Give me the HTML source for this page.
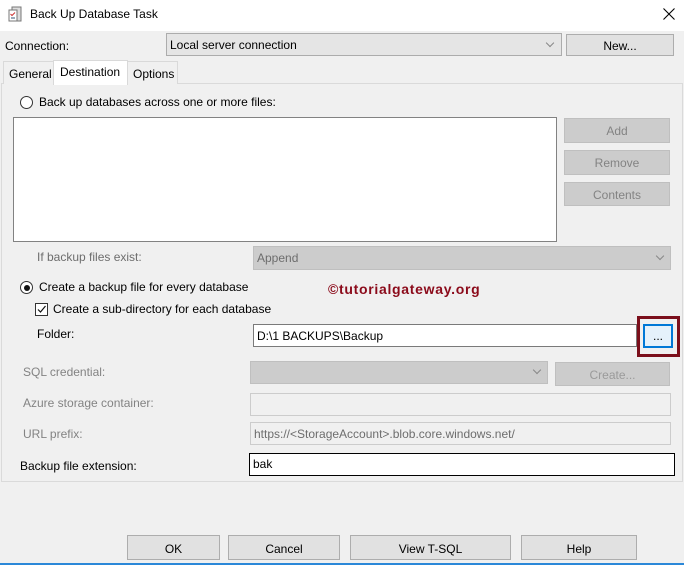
<!DOCTYPE html>
<html><head><style>
*{box-sizing:border-box;margin:0;padding:0}
body{width:684px;height:565px;background:#f0f0f0;font-family:"Liberation Sans",sans-serif;font-size:12px;color:#000;position:relative;overflow:hidden}
.a{position:absolute;white-space:nowrap}
.btn{position:absolute;background:#e1e1e1;border:1px solid #adadad;text-align:center}
.dis{position:absolute;background:#cccccc;border:1px solid #bfbfbf;color:#838383;text-align:center}
.g{color:#6d6d6d}
.tb{position:absolute;background:#fff;border:1px solid #7a7a7a;padding-left:3px}
.chev{position:absolute;width:6px;height:6px;border-right:1px solid #888;border-bottom:1px solid #888;transform:rotate(45deg)}
</style></head><body>
<div class="a" style="left:0;top:0;width:684px;height:31px;background:#fff"></div>
<svg class="a" style="left:8px;top:6px" width="14" height="17" viewBox="0 0 14 17"><rect x="4" y="1" width="9" height="14" fill="#ddd" stroke="#777"/><rect x="1" y="4" width="8" height="11" fill="#fff" stroke="#777"/><path d="M2.5 8l1.5 1.5 3-3" stroke="#c33" fill="none"/><path d="M3 12h4" stroke="#357"/></svg>
<div class="a" style="left:30px;top:7px;font-size:12px">Back Up Database Task</div>
<svg class="a" style="left:663px;top:8px" width="12" height="12"><path d="M0.5 0.5L11.5 11.5M11.5 0.5L0.5 11.5" stroke="#000" stroke-width="1.1"/></svg>

<div class="a" style="left:5px;top:39px">Connection:</div>
<div class="a" style="left:166px;top:33px;width:396px;height:23px;background:#e5e5e5;border:1px solid #acacac;padding:4px 0 0 3px">Local server connection</div>
<div class="chev" style="left:547px;top:40px"></div>
<div class="btn" style="left:566px;top:34px;width:108px;height:22px;padding-top:4px">New...</div>

<div class="a" style="left:1px;top:83px;width:682px;height:399px;border:1px solid #dadada;background:#f0f0f0"></div>
<div class="a" style="left:3px;top:61px;width:51px;height:23px;border:1px solid #d9d9d9;border-bottom:none;background:#f0f0f0;padding:5px 0 0 5px">General</div>
<div class="a" style="left:53px;top:60px;width:75px;height:25px;border:1px solid #d9d9d9;border-bottom:none;background:#fff;padding:4px 0 0 6px">Destination</div>
<div class="a" style="left:127px;top:61px;width:51px;height:23px;border:1px solid #d9d9d9;border-bottom:none;background:#f0f0f0;padding:5px 0 0 5px">Options</div>

<div class="a" style="left:20px;top:96px;width:13px;height:13px;border:1px solid #333;border-radius:50%;background:#fff"></div>
<div class="a" style="left:39px;top:95px">Back up databases across one or more files:</div>
<div class="a" style="left:13px;top:117px;width:544px;height:125px;background:#fff;border:1px solid #828282"></div>
<div class="dis" style="left:564px;top:118px;width:106px;height:25px;padding-top:5px">Add</div>
<div class="dis" style="left:564px;top:150px;width:106px;height:25px;padding-top:5px">Remove</div>
<div class="dis" style="left:564px;top:182px;width:106px;height:24px;padding-top:5px">Contents</div>

<div class="a g" style="left:37px;top:250px">If backup files exist:</div>
<div class="dis" style="left:253px;top:246px;width:418px;height:24px;text-align:left;padding:4px 0 0 3px;color:#6d6d6d">Append</div>
<div class="chev" style="left:657px;top:253px"></div>

<div class="a" style="left:20px;top:281px;width:13px;height:13px;border:1px solid #333;border-radius:50%;background:#fff"><div class="a" style="left:2.5px;top:2.5px;width:6px;height:6px;border-radius:50%;background:#111"></div></div>
<div class="a" style="left:39px;top:280px">Create a backup file for every database</div>
<div class="a" style="left:328px;top:281px;font-size:14px;font-weight:bold;color:#8b0a1a;letter-spacing:0.7px">©tutorialgateway.org</div>
<div class="a" style="left:35px;top:303px;width:13px;height:13px;border:1px solid #333;background:#fff"></div>
<svg class="a" style="left:36px;top:304px" width="11" height="11"><path d="M2 5.5l2.5 2.5 5-6" stroke="#111" fill="none" stroke-width="1.2"/></svg>
<div class="a" style="left:53px;top:302px">Create a sub-directory for each database</div>
<div class="a" style="left:37px;top:327px">Folder:</div>
<div class="tb" style="left:253px;top:324px;width:384px;height:23px;padding-top:4px">D:\1 BACKUPS\Backup</div>
<div class="a" style="left:637px;top:316px;width:43px;height:41px;border:3px solid #7b0f1b"></div>
<div class="a" style="left:643px;top:324px;width:30px;height:24px;background:#e5f1fb;border:2px solid #0078d7;text-align:center;padding-top:3px">...</div>

<div class="a g" style="left:23px;top:365px;color:#838383">SQL credential:</div>
<div class="dis" style="left:250px;top:361px;width:298px;height:23px"></div>
<div class="chev" style="left:534px;top:367px"></div>
<div class="dis" style="left:555px;top:362px;width:115px;height:24px;padding-top:5px;color:#9a9a9a">Create...</div>
<div class="a g" style="left:23px;top:396px;color:#838383">Azure storage container:</div>
<div class="a" style="left:250px;top:393px;width:421px;height:23px;border:1px solid #ccc;background:#f0f0f0"></div>
<div class="a g" style="left:23px;top:427px;color:#838383">URL prefix:</div>
<div class="a" style="left:250px;top:422px;width:421px;height:23px;border:1px solid #ccc;background:#f0f0f0;color:#6d6d6d;padding:4px 0 0 3px">https://&lt;StorageAccount&gt;.blob.core.windows.net/</div>
<div class="a" style="left:20px;top:459px">Backup file extension:</div>
<div class="tb" style="left:249px;top:453px;width:426px;height:23px;border-color:#000;padding-top:3px">bak</div>

<div class="btn" style="left:127px;top:535px;width:93px;height:25px;padding-top:6px">OK</div>
<div class="btn" style="left:228px;top:535px;width:112px;height:25px;padding-top:6px">Cancel</div>
<div class="btn" style="left:350px;top:535px;width:161px;height:25px;padding-top:6px">View T-SQL</div>
<div class="btn" style="left:521px;top:535px;width:116px;height:25px;padding-top:6px">Help</div>
<div class="a" style="left:0;top:563px;width:684px;height:2px;background:#2b88d8"></div>
</body></html>
